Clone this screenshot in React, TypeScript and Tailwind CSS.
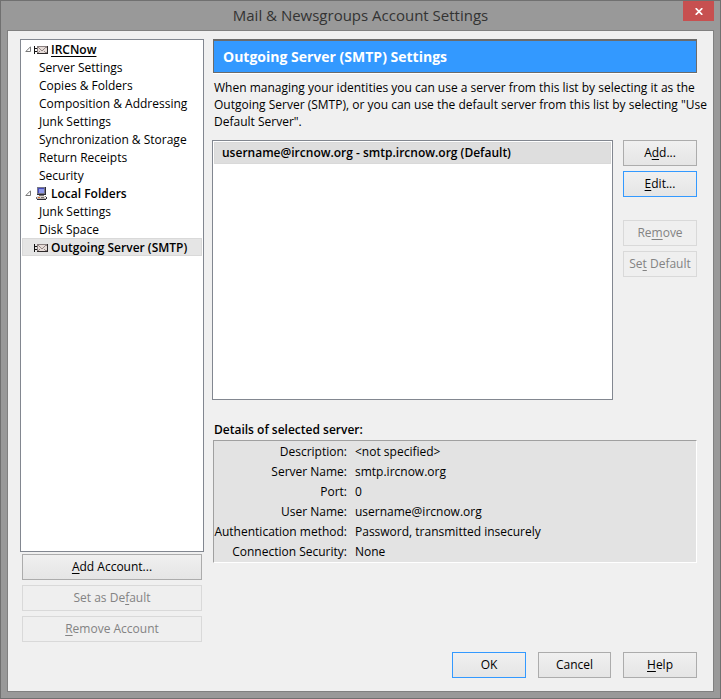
import { useState } from "react";
import type { ReactNode } from "react";

interface TreeItem {
  id: string;
  label: string;
  icon?: "mail" | "computer";
  open?: boolean;
  underline?: boolean;
}

const treeItems: TreeItem[] = [
  { id: "ircnow", label: "IRCNow", icon: "mail", open: true, underline: true },
  { id: "server", label: "Server Settings" },
  { id: "copies", label: "Copies & Folders" },
  { id: "composition", label: "Composition & Addressing" },
  { id: "junk", label: "Junk Settings" },
  { id: "sync", label: "Synchronization & Storage" },
  { id: "receipts", label: "Return Receipts" },
  { id: "security", label: "Security" },
  { id: "local", label: "Local Folders", icon: "computer", open: true },
  { id: "local-junk", label: "Junk Settings" },
  { id: "disk", label: "Disk Space" },
  { id: "smtp", label: "Outgoing Server (SMTP)", icon: "mail" },
];

const details = [
  { label: "Description:", value: "<not specified>" },
  { label: "Server Name:", value: "smtp.ircnow.org" },
  { label: "Port:", value: "0" },
  { label: "User Name:", value: "username@ircnow.org" },
  { label: "Authentication method:", value: "Password, transmitted insecurely" },
  { label: "Connection Security:", value: "None" },
];

const MailIcon = () => (
  <svg width="14" height="10" viewBox="0 0 14 10" shapeRendering="crispEdges" className="translate-y-px" aria-hidden="true">
    <path d="M0 1h1v8H0zM1 3h2v1H1zM1 6h2v1H1z" fill="#111" />
    <path d="M3 1h11v8H3z" fill="#8a8080" />
    <path d="M3 8h11v1H3zM13 1h1v8h-1z" fill="#2e2a2a" />
    <path d="M4 2h9v6H4z" fill="#e6dcd8" />
    <path
      d="M4 2h1v1H4zM5 3h1v1H5zM6 4h1v1H6zM7 5h2v1H7zM9 4h1v1H9zM10 3h1v1h-1zM11 2h2v1h-2zM5 6h1v1H5zM4 7h1v1H4zM10 6h1v1h-1zM11 7h2v1h-2z"
      fill="#958988"
    />
  </svg>
);

const ComputerIcon = () => (
  <svg width="11" height="13" viewBox="0 0 11 13" shapeRendering="crispEdges" aria-hidden="true">
    <path d="M1 0h8v8H1z" fill="#77778a" />
    <path d="M9 0h1v8H9zM1 7h9v1H1z" fill="#2c2c36" />
    <path d="M2 1h6v5H2z" fill="#4549b8" />
    <path d="M3 2h5v4H3z" fill="#8d97ea" />
    <path d="M3 8h5v1H3z" fill="#77716f" />
    <path d="M1 9h8v2H1z" fill="#dad6d3" />
    <path d="M0 10h1v2H0zM9 9h1v1H9z" fill="#77716f" />
    <path d="M1 11h9v1H1z" fill="#b9b3b0" />
    <path d="M2 10h2v1H2z" fill="#e2702a" />
    <path d="M5 10h3v1H5z" fill="#77716f" />
    <path d="M10 10h1v2h-1zM1 12h9v1H1z" fill="#2c2c36" />
  </svg>
);

const Twisty = () => (
  <svg width="6" height="6" viewBox="0 0 6 6" aria-hidden="true">
    <path d="M5.500 .8v4.700H.8z" fill="#fff" stroke="#777" strokeWidth="1" />
  </svg>
);

interface DialogButtonProps {
  children: ReactNode;
  className?: string;
  disabled?: boolean;
  highlighted?: boolean;
}

const DialogButton = ({ children, className = "", disabled, highlighted }: DialogButtonProps) => {
  const look = disabled
    ? "border-[#d9d9d9] bg-[#efefef] text-[#838383]"
    : highlighted
      ? "border-[#3399ff] bg-linear-to-b from-[#f0f0f0] to-[#e5e5e5]"
      : "border-[#acacac] bg-linear-to-b from-[#f0f0f0] to-[#e5e5e5]";
  return (
    <button
      type="button"
      disabled={disabled}
      className={`h-[26px] shrink-0 border pb-px text-center ${look} ${className}`}
    >
      {children}
    </button>
  );
};

const Key = ({ children }: { children: string }) => (
  <span className="underline underline-offset-2">{children}</span>
);

const AccountTree = () => {
  const [selected, setSelected] = useState("smtp");

  return (
    <ul className="flex-1 border border-[#828790] bg-white px-px">
      {treeItems.map((item) => (
        <li key={item.id}>
          <button
            type="button"
            onClick={() => setSelected(item.id)}
            className={`flex h-[18px] w-full items-center border whitespace-nowrap ${
              selected === item.id ? "border-[#d9d9d9] bg-[#e5e5e5]" : "border-transparent"
            } ${item.icon ? "pl-0.5 font-semibold" : "pl-4"}`}
          >
            {item.icon && (
              <>
                <span className="w-2">{item.open && <Twisty />}</span>
                <span className="mr-0.5 flex w-4 justify-center">
                  {item.icon === "mail" ? <MailIcon /> : <ComputerIcon />}
                </span>
              </>
            )}
            <span className={item.underline ? "underline underline-offset-2" : ""}>{item.label}</span>
          </button>
        </li>
      ))}
    </ul>
  );
};

const App = () => {
  return (
    <div className="flex min-h-screen flex-col border border-[#707070] bg-[#999999] px-1.5 pb-1.5 font-['Open_Sans',sans-serif] text-[12px] leading-[17px] text-black">
      <header className="relative flex h-[29px] items-center justify-center">
        <h1 className="text-[15px] text-[#333]">Mail &amp; Newsgroups Account Settings</h1>
        <button
          type="button"
          aria-label="Close"
          className="absolute top-0 right-0 flex h-5 w-[31px] items-center justify-center bg-[#c75050]"
        >
          <svg width="8" height="7" viewBox="0 0 8 7" aria-hidden="true">
            <path d="M.7 .2l6.600 6.600M7.300 .2L.7 6.800" stroke="#fff" strokeWidth="1.700" />
          </svg>
        </button>
      </header>

      <div className="flex flex-1 flex-col border border-[#808080] bg-[#f0f0f0] pt-2 pr-4 pb-[13px] pl-3">
        <div className="flex flex-1 gap-2">
          <aside className="flex w-[184px] shrink-0 flex-col">
            <AccountTree />
            <div className="mt-0.5 flex flex-col gap-[5px] px-0.5">
              <DialogButton>
                <Key>A</Key>dd Account...
              </DialogButton>
              <DialogButton disabled>
                Set as De<Key>f</Key>ault
              </DialogButton>
              <DialogButton disabled>
                <Key>R</Key>emove Account
              </DialogButton>
            </div>
          </aside>

          <main className="flex min-w-0 flex-1 flex-col">
            <h2 className="ml-px flex h-[34px] items-center border border-t-2 border-[#6b6b6b] bg-[#3399ff] pl-[9px] text-[14px] font-bold text-white shadow-[0_1px_0_#fff]">
              Outgoing Server (SMTP) Settings
            </h2>
            <p className="mt-1.5 -mr-4 pl-0.5">
              When managing your identities you can use a server from this list by selecting it as the
              <br />
              Outgoing Server (SMTP), or you can use the default server from this list by selecting "Use
              <br />
              Default Server".
            </p>

            <div className="mt-2.5 flex gap-2.5">
              <ul className="h-[260px] flex-1 border border-[#828790] bg-white p-px">
                <li className="h-[22px] border border-[#d9d9d9] bg-[#dedede] pl-[7px] leading-5 font-semibold">
                  username@ircnow.org - smtp.ircnow.org (Default)
                </li>
              </ul>
              <div className="flex w-[74px] shrink-0 flex-col gap-[5px]">
                <DialogButton>
                  A<Key>d</Key>d...
                </DialogButton>
                <DialogButton highlighted>
                  <Key>E</Key>dit...
                </DialogButton>
                <DialogButton disabled className="mt-[18px]">
                  Re<Key>m</Key>ove
                </DialogButton>
                <DialogButton disabled>
                  Se<Key>t</Key> Default
                </DialogButton>
              </div>
            </div>

            <h3 className="mt-[21px] pl-0.5 font-semibold">Details of selected server:</h3>
            <dl className="mt-0.5 ml-px border border-t-[#a0a0a0] border-r-white border-b-white border-l-[#a0a0a0] bg-[#e3e3e3] pt-px leading-5">
              {details.map((detail) => (
                <div key={detail.label} className="flex gap-2">
                  <dt className="w-[133px] shrink-0 text-right">{detail.label}</dt>
                  <dd>{detail.value}</dd>
                </div>
              ))}
            </dl>
          </main>
        </div>

        <footer className="mt-2.5 flex justify-end gap-3">
          <DialogButton highlighted className="w-[74px]">
            OK
          </DialogButton>
          <DialogButton className="w-[73px]">Cancel</DialogButton>
          <DialogButton className="w-[74px]">
            <Key>H</Key>elp
          </DialogButton>
        </footer>
      </div>
    </div>
  );
};

export default App;
